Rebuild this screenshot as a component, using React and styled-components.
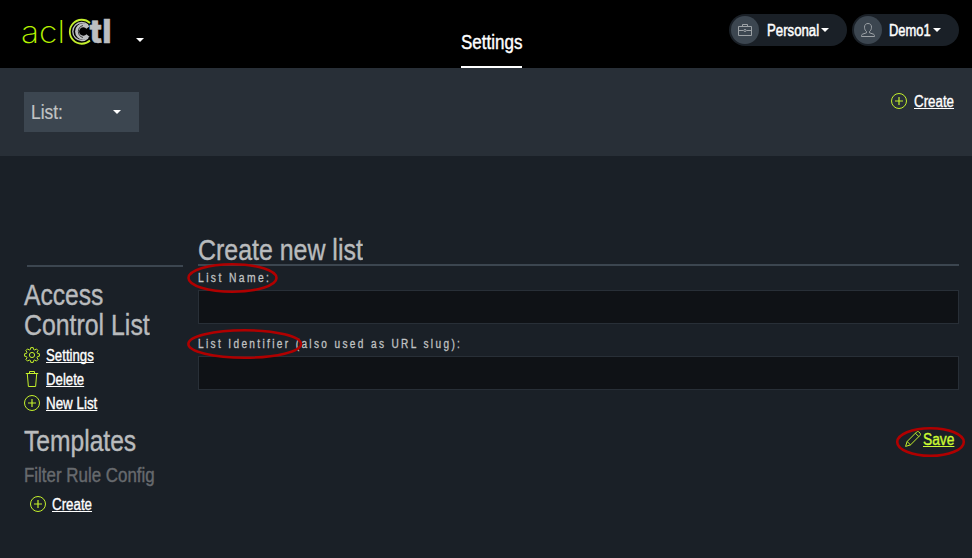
import React, { useLayoutEffect, useRef, useState } from "react";
import styled, { createGlobalStyle } from "styled-components";

const Global = createGlobalStyle`
  * { box-sizing: border-box; }
  body { margin: 0; background: #1a2027; overflow: hidden; font-family: "Liberation Sans", Arial, sans-serif; color: #fff; }
  h1, h2, h3 { margin: 0; font-weight: 400; }
  svg { display: block; }
`;

/* Condenses its text to an exact width */
const FitBox = styled.span`
  display: block;
  width: ${(p) => p.$w}px;
  white-space: nowrap;
  flex: none;
`;
const FitInner = styled.span`
  display: inline-block;
  vertical-align: top;
  transform-origin: 0 0;
`;
function Fit({ w, children }) {
  const ref = useRef(null);
  const [k, setK] = useState(0.83);
  useLayoutEffect(() => {
    setK(w / ref.current.offsetWidth);
  }, [w]);
  return (
    <FitBox $w={w}>
      <FitInner ref={ref} style={{ transform: `scaleX(${k})` }}>{children}</FitInner>
    </FitBox>
  );
}

const Page = styled.div`
  position: relative;
  width: 972px;
  height: 558px;
`;
const Header = styled.header`
  display: flex;
  align-items: flex-start;
  height: 68px;
  background: #000;
`;
const Brand = styled.div`
  display: flex;
  width: 461px;
  padding-left: 20px;
`;
const BrandCaret = styled.div`
  padding: 38px 0 0 22px;
`;
const Caret = styled.span`
  display: block;
  flex: none;
  width: 8px;
  height: 4px;
  border: 4px solid transparent;
  border-top-color: #fff;
  border-bottom: 0;
`;
const Tab = styled.a`
  display: block;
  width: 61px;
  height: 68px;
  padding-top: 32px;
  border-bottom: 2px solid #fff;
  font-size: 19.5px;
  line-height: 20px;
  -webkit-text-stroke: 0.4px #fff;
`;
const Account = styled.div`
  display: flex;
  gap: 5px;
  margin: 14px 13px 0 auto;
`;
const Pill = styled.div`
  display: flex;
  align-items: center;
  width: ${(p) => p.$w}px;
  height: 32px;
  padding-left: 2px;
  border-radius: 16px;
  background: #1a2027;
  font-size: 16px;
  line-height: 18px;
  -webkit-text-stroke: 0.5px #fff;
`;
const PillText = styled.span`
  padding-top: 2px;
`;
const Avatar = styled.span`
  display: grid;
  place-items: center;
  width: 28px;
  height: 28px;
  margin-right: ${(p) => p.$gap}px;
  border-radius: 50%;
  background: #3c4650;
`;
const PillCaret = styled(Caret)`
  margin-left: 2px;
`;
const Toolbar = styled.div`
  display: flex;
  justify-content: space-between;
  align-items: flex-start;
  height: 88px;
  padding: 24px 18px 0 24px;
  background: #282f37;
`;
const Select = styled.div`
  display: flex;
  align-items: center;
  justify-content: space-between;
  width: 115px;
  height: 40px;
  padding: 0 18px 0 7px;
  background: #3c4650;
  color: #c2c4c6;
  font-size: 19.5px;
  line-height: 24px;
  -webkit-text-stroke: 0.2px #c2c4c6;
`;
const Action = styled.a`
  display: flex;
  align-items: center;
  gap: ${(p) => p.$gap || 6}px;
  height: 24px;
  margin: ${(p) => p.$m || 0};
  color: ${(p) => (p.$accent ? "#cdfb33" : "#fff")};
  font-size: 16px;
  line-height: 20px;
  -webkit-text-stroke: 0.35px currentColor;

  ${FitBox} {
    padding-top: 2px;
  }
  ${FitInner} {
    text-decoration: underline;
    text-decoration-thickness: 1px;
    text-decoration-skip-ink: none;
    text-underline-offset: 1px;
  }
`;
const Body = styled.div`
  display: flex;
  padding: 0 13px 0 24px;
`;
const Sidebar = styled.aside`
  width: 174px;
  padding-top: 109px;
`;
const Rule = styled.div`
  width: 156px;
  height: 2px;
  margin-left: 3px;
  background: #3c4650;
`;
const Heading = styled.h2`
  margin-top: ${(p) => p.$top}px;
  color: #b9bbbd;
  font-size: 29px;
  line-height: 30px;
  -webkit-text-stroke: 0.4px #b9bbbd;
`;
const Sub = styled.h3`
  margin: 9px 0 7px;
  color: #676a6e;
  font-size: 19.5px;
  line-height: 20px;
  -webkit-text-stroke: 0.4px #676a6e;
`;
const Main = styled.main`
  flex: 1;
  padding-top: 79px;
`;
const Title = styled.h1`
  height: 31px;
  border-bottom: 2px solid #3c4650;
  color: #b9bbbd;
  font-size: 29px;
  line-height: 30px;
  -webkit-text-stroke: 0.4px #b9bbbd;
`;
const FieldLabel = styled.label`
  display: block;
  padding: ${(p) => p.$top}px 0 0;
  height: ${(p) => p.$top + 20}px;
  color: #c0c2c3;
  font-size: 12px;
  line-height: 16px;
  letter-spacing: 2.8px;
  -webkit-text-stroke: 0.3px #c0c2c3;
`;
const Input = styled.input`
  display: block;
  width: 761px;
  height: 34px;
  border: 1px solid #282f37;
  border-radius: 0;
  background: #0f1216;
  outline: none;
`;
const FormActions = styled.div`
  display: flex;
  justify-content: flex-end;
  padding: 37px 5px 0 0;
`;
const Marks = styled.svg`
  position: absolute;
  inset: 0;
  pointer-events: none;
`;

const Icon = styled.svg.attrs({ width: 16, height: 16, viewBox: "0 0 16 16" })`
  flex: none;
  fill: none;
  stroke: ${(p) => p.$c || "#c4f02c"};
  stroke-width: 1;
`;
const PlusIcon = () => (
  <Icon><circle cx="8" cy="8" r="7.5" /><path d="M8 4v8M4 8h8" strokeWidth="1.2" /></Icon>
);
const GearIcon = () => (
  <Icon>
    <path strokeLinejoin="round" d="M6.8.6h2.4l.4 1.9 1.2.5 1.6-1.1 1.7 1.7L13 5.2l.5 1.2 1.9.4v2.4l-1.9.4-.5 1.2 1.1 1.6-1.7 1.7-1.6-1.1-1.2.5-.4 1.9H6.8l-.4-1.900-1.200-.5-1.600 1.100-1.700-1.700L3 10.800l-.5-1.200L.6 9.200V6.800l1.900-.4L3 5.200 1.900 3.600l1.700-1.700L5.200 3l1.200-.5z" />
    <circle cx="8" cy="8" r="2.600" />
  </Icon>
);
const TrashIcon = () => (
  <Icon><path d="M1.800 2.500h12.400M5.500 2.300V.5h5v1.800M3.300 2.800l1.100 12.700h7.200l1.100-12.700" /></Icon>
);
const PencilIcon = () => (
  <Icon>
    <path strokeLinejoin="round" d="M.6 15.400l1.500-4.900L11.600 1c.7-.7 1.600-.6 2.300 0l1.100 1.100c.6.7.7 1.600 0 2.300L5.500 13.900zM2.100 10.500l3.400 3.400M10.400 2.200l3.400 3.400" />
  </Icon>
);
const BriefcaseIcon = () => (
  <Icon $c="#9da2a6">
    <path d="M1.500 4.500h13v9h-13zM5.500 4.300V2.500h5v1.800M1.500 8.500h5M9.500 8.500h5" /><circle cx="8" cy="8.500" r="1.100" />
  </Icon>
);
const UserIcon = () => (
  <Icon $c="#9da2a6">
    <path strokeLinejoin="round" d="M8 1.500c-2.300 0-3.500 1.500-3.500 3.700 0 1.900.8 3.600 2 4.300v1.300L2.500 12.200c-.8.3-1 1-1 2.300h13c0-1.300-.2-2-1-2.300L9.500 10.800V9.500c1.200-.7 2-2.400 2-4.300 0-2.200-1.200-3.700-3.500-3.700z" />
  </Icon>
);
const Logo = () => (
  <svg width="94" height="56" viewBox="20 0 94 56">
    <text x="21" y="43" fontFamily="Inter" fontWeight="200" fontSize="31" fill="#b4f000" textLength="44" lengthAdjust="spacingAndGlyphs">acl</text>
    <g fill="none">
      <path d="M90 23A12 12 0 1 0 90 40.500" stroke="#c4f02c" strokeWidth="1.800" />
      <path d="M88 25A9 9 0 1 0 88 38" stroke="#bcbec0" strokeWidth="1.300" />
      <path d="M88 27.500A6.200 6.200 0 1 0 88 35.500" stroke="#bcbec0" strokeWidth="4" />
      <path d="M83 25.500A6.200 6.200 0 0 0 83 37.500" stroke="#000" strokeWidth=".7" />
    </g>
    <text x="89.500" y="42.500" fontFamily="Inter" fontWeight="800" fontSize="33" fill="#bcbec0" stroke="#bcbec0" strokeWidth=".5" textLength="22" lengthAdjust="spacingAndGlyphs">tl</text>
  </svg>
);

export default function App() {
  return (
    <Page>
      <Global />
      <Header>
        <Brand><Logo /><BrandCaret><Caret /></BrandCaret></Brand>
        <Tab><Fit w={61}>Settings</Fit></Tab>
        <Account>
          <Pill $w={118}><Avatar $gap={8}><BriefcaseIcon /></Avatar><PillText><Fit w={52}>Personal</Fit></PillText><PillCaret /></Pill>
          <Pill $w={107}><Avatar $gap={7}><UserIcon /></Avatar><PillText><Fit w={42}>Demo1</Fit></PillText><PillCaret /></Pill>
        </Account>
      </Header>
      <Toolbar>
        <Select><Fit w={32}>List:</Fit><Caret /></Select>
        <Action $m="-3px 0 0" $gap={7}><PlusIcon /><Fit w={40}>Create</Fit></Action>
      </Toolbar>
      <Body>
        <Sidebar>
          <Rule />
          <Heading $top={13}><Fit w={79}>Access</Fit><Fit w={126}>Control List</Fit></Heading>
          <Action $m="3px 0 0"><GearIcon /><Fit w={48}>Settings</Fit></Action>
          <Action><TrashIcon /><Fit w={38}>Delete</Fit></Action>
          <Action><PlusIcon /><Fit w={51}>New List</Fit></Action>
          <Heading $top={11}><Fit w={112}>Templates</Fit></Heading>
          <Sub><Fit w={131}>Filter Rule Config</Fit></Sub>
          <Action $m="0 0 0 6px"><PlusIcon /><Fit w={40}>Create</Fit></Action>
        </Sidebar>
        <Main>
          <Title><Fit w={165}>Create new list</Fit></Title>
          <FieldLabel $top={4}><Fit w={73}>List Name:</Fit></FieldLabel>
          <Input />
          <FieldLabel $top={12}><Fit w={264}>List Identifier (also used as URL slug):</Fit></FieldLabel>
          <Input />
          <FormActions><Action $accent $gap={2}><PencilIcon /><Fit w={31}>Save</Fit></Action></FormActions>
        </Main>
      </Body>
      <Marks width="972" height="558" fill="none" stroke="#b00000" strokeWidth="2.600">
        <ellipse cx="232.500" cy="278" rx="44" ry="13.700" />
        <ellipse cx="244.700" cy="344" rx="56.300" ry="13.700" />
        <ellipse cx="930.500" cy="442" rx="33.300" ry="13.800" />
      </Marks>
    </Page>
  );
}
